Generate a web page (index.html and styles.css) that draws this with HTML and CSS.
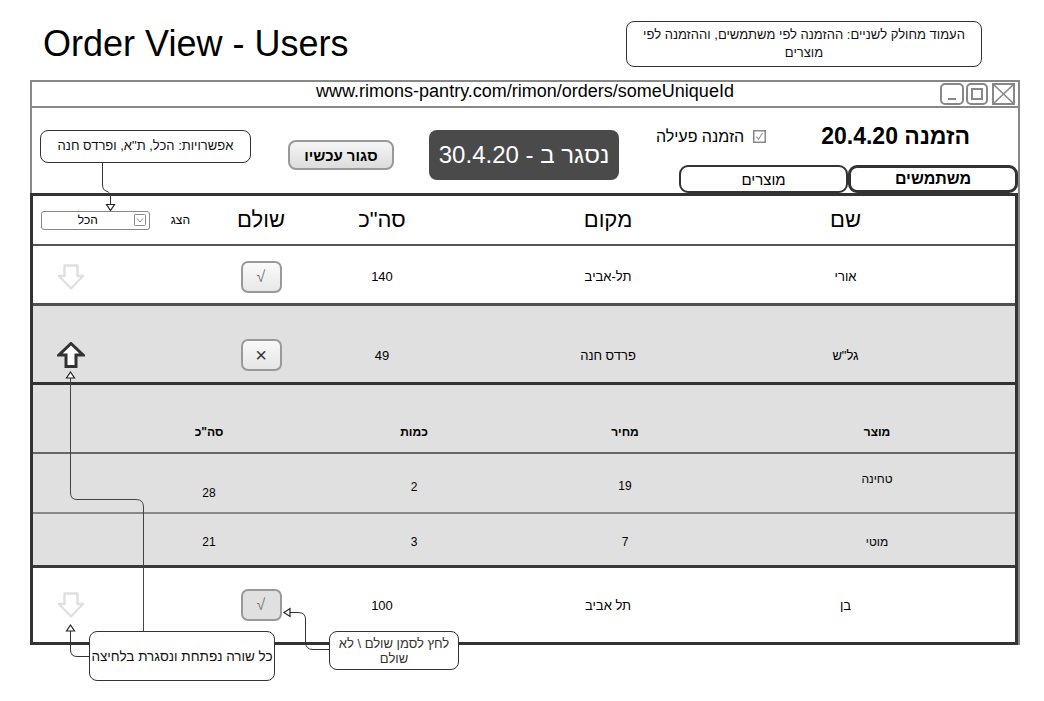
FILE: index.html
```html
<!DOCTYPE html>
<html lang="he">
<head>
<meta charset="utf-8">
<title>Order View - Users</title>
<link rel="stylesheet" href="styles.css">
</head>
<body>
<div class="page">
  <header class="top">
    <h1 class="page-title">Order View - Users</h1>
    <div class="note note-split" dir="rtl">העמוד מחולק לשניים: ההזמנה לפי משתמשים, וההזמנה לפי<br>מוצרים</div>
  </header>

  <div class="window">
    <div class="titlebar">
      <span class="url">www.rimons-pantry.com/rimon/orders/someUniqueId</span>
      <svg class="win-controls" width="76" height="22" viewBox="0 0 76 22">
        <rect x="1" y="1" width="22" height="20" rx="4" fill="none" stroke="#888" stroke-width="2"/>
        <line x1="8" y1="16" x2="16" y2="16" stroke="#888" stroke-width="2"/>
        <rect x="27" y="1" width="20" height="20" rx="4" fill="none" stroke="#888" stroke-width="2"/>
        <rect x="32" y="6" width="10" height="10" fill="none" stroke="#888" stroke-width="2"/>
        <rect x="53" y="1" width="21" height="20" fill="none" stroke="#888" stroke-width="2"/>
        <line x1="53" y1="1" x2="74" y2="21" stroke="#888" stroke-width="1.6"/>
        <line x1="74" y1="1" x2="53" y2="21" stroke="#888" stroke-width="1.6"/>
      </svg>
    </div>

    <div class="toolbar" dir="rtl">
      <div class="order-side">
        <div class="order-head">
          <span class="order-title">הזמנה 20.4.20</span>
          <span class="active-check">
            <svg class="checkbox" width="13" height="13" viewBox="0 0 13 13">
              <rect x="0.75" y="0.75" width="11.5" height="11.5" fill="#fff" stroke="#888" stroke-width="1.5"/>
              <path d="M3.5 6.5 L5.5 9.5 L9.5 3" fill="none" stroke="#999" stroke-width="1.2"/>
            </svg>
            <span>הזמנה פעילה</span>
          </span>
        </div>
        <div class="tabs">
          <div class="tab tab-active">משתמשים</div>
          <div class="tab tab-second">מוצרים</div>
        </div>
      </div>
      <div class="closing-box">נסגר ב - 30.4.20</div>
      <div class="close-btn">סגור עכשיו</div>
      <div class="note note-filter">אפשרויות: הכל, ת"א, ופרדס חנה</div>
    </div>

    <div class="table" dir="rtl">
      <div class="trow thead">
        <div></div>
        <div class="cell">שם</div>
        <div class="cell">מקום</div>
        <div class="cell">סה"כ</div>
        <div class="cell">שולם</div>
        <div class="filter">
          <span class="filter-label">הצג</span>
          <div class="select">
            <svg class="sel-icon" width="12" height="12" viewBox="0 0 12 12">
              <rect x="0.5" y="0.5" width="11" height="11" rx="1" fill="#fff" stroke="#888"/>
              <path d="M3 4.5 L6 8 L9 4.5" fill="none" stroke="#888" stroke-width="1"/>
            </svg>
            <span class="sel-text">הכל</span>
          </div>
        </div>
      </div>

      <div class="trow row row-first">
        <div></div>
        <div class="cell">אורי</div>
        <div class="cell">תל-אביב</div>
        <div class="cell">140</div>
        <div class="cell"><span class="pay-btn">√</span></div>
        <div class="arrow-cell">
          <svg width="28" height="26" viewBox="0 0 28 26"><path d="M7.5 1.5 H20.5 V12 H26 L14 24.5 L2 12 H7.5 Z" fill="#fff" stroke="#e0e0e0" stroke-width="2.5" stroke-linejoin="round"/></svg>
        </div>
      </div>

      <div class="trow row row-open">
        <div></div>
        <div class="cell">גל"ש</div>
        <div class="cell">פרדס חנה</div>
        <div class="cell">49</div>
        <div class="cell"><span class="pay-btn pay-no">×</span></div>
        <div class="arrow-cell">
          <svg width="28" height="26" viewBox="0 0 28 26"><path d="M14 1.5 L26 13 H19 V24.5 H9 V13 H2 Z" fill="#fff" stroke="#333" stroke-width="3" stroke-linejoin="miter"/></svg>
        </div>
      </div>

      <div class="sub">
        <div class="srow shead">
          <div class="scell c-prod">מוצר</div>
          <div class="scell c-price">מחיר</div>
          <div class="scell c-qty">כמות</div>
          <div class="scell c-sum">סה"כ</div>
        </div>
        <div class="srow srow-a">
          <div class="scell c-prod o18">טחינה</div>
          <div class="scell c-price o25">19</div>
          <div class="scell c-qty o26">2</div>
          <div class="scell c-sum o32">28</div>
        </div>
        <div class="srow srow-b">
          <div class="scell c-prod">מוטי</div>
          <div class="scell c-price">7</div>
          <div class="scell c-qty">3</div>
          <div class="scell c-sum">21</div>
        </div>
      </div>

      <div class="trow row row-last">
        <div></div>
        <div class="cell">בן</div>
        <div class="cell">תל אביב</div>
        <div class="cell">100</div>
        <div class="cell"><span class="pay-btn pay-pressed">√</span></div>
        <div class="arrow-cell">
          <svg width="28" height="26" viewBox="0 0 28 26"><path d="M7.5 1.5 H20.5 V12 H26 L14 24.5 L2 12 H7.5 Z" fill="#fff" stroke="#e0e0e0" stroke-width="2.5" stroke-linejoin="round"/></svg>
        </div>
      </div>
    </div>
  </div>

  <svg class="connectors" width="1044" height="701" viewBox="0 0 1044 701">
    <g fill="none" stroke="#333" stroke-width="1">
      <path d="M102.5 163 V184 Q102.5 190 106 191 Q110.5 192 110.5 197 V204"/>
      <path d="M329 649.5 H313 Q305.5 649.5 305.5 642 V619 Q305.5 612.5 298 612.5 H290"/>
      <path d="M89 656.5 H77 Q70.5 656.5 70.5 650 V631"/>
      <path d="M143.5 631 V507 Q143.5 499.5 136 499.5 H77 Q70.5 499.5 70.5 493 V378" stroke="#444"/>
    </g>
    <g fill="#fff" stroke="#222" stroke-width="1.2">
      <polygon points="106.5,204.5 114.5,204.5 110.5,210.5"/>
      <polygon points="290,608.5 290,616.5 284,612.5"/>
      <polygon points="66.5,631 74.5,631 70.5,625"/>
      <polygon points="66.5,378 74.5,378 70.5,372"/>
    </g>
  </svg>

  <div class="note note-rows" dir="rtl">כל שורה נפתחת ונסגרת בלחיצה</div>
  <div class="note note-paid" dir="rtl">לחץ לסמן שולם \ לא<br>שולם</div>
</div>
</body>
</html>
```

FILE: styles.css
```css
* { box-sizing: border-box; }

body {
  margin: 0;
  background: #fff;
  color: #000;
  font-family: "Liberation Sans", Arial, "DejaVu Sans", sans-serif;
}

.page {
  position: relative;
  width: 1044px;
  height: 701px;
  overflow: hidden;
}

/* ---------- top heading ---------- */
.top {
  height: 80px;
  display: flex;
  justify-content: space-between;
  align-items: flex-start;
  padding: 0 62px 0 43px;
}

.page-title {
  margin: 24px 0 0;
  font-size: 36px;
  line-height: 40px;
  font-weight: normal;
}

.note {
  border: 1.5px solid #333;
  border-radius: 8px;
  background: #fff;
  text-align: center;
  color: #111;
  white-space: nowrap;
}

.note-split {
  margin-top: 21px;
  width: 356px;
  height: 46px;
  padding: 4px 6px;
  font-size: 13px;
  line-height: 18px;
}

/* ---------- browser window ---------- */
.window {
  margin-left: 30px;
  width: 990px;
  border: 2px solid #888;
  border-bottom: none;
}

.titlebar {
  display: grid;
  grid-template-columns: 1fr auto 1fr;
  height: 26px;
  border-bottom: 2px solid #888;
}

.url {
  grid-column: 2;
  font-size: 18px;
  line-height: 19px;
}

.win-controls {
  grid-column: 3;
  justify-self: end;
  margin: 1px 2px 0 0;
}

/* ---------- toolbar ---------- */
.toolbar {
  height: 85px;
  display: flex;
  align-items: flex-start;
}

.order-side {
  flex-shrink: 0;
  width: 339px;
  height: 85px;
  display: flex;
  flex-direction: column;
  justify-content: space-between;
}

.order-head {
  display: flex;
  align-items: center;
  padding: 15px 48px 0 0;
  white-space: nowrap;
}

.order-title {
  flex-shrink: 0;
  font-size: 23px;
  font-weight: bold;
  line-height: 26px;
}

.active-check {
  flex-shrink: 0;
  margin-right: 55px;
  margin-top: 1px;
  display: flex;
  align-items: center;
  gap: 9px;
  font-size: 16px;
  line-height: 18px;
}

.tabs {
  display: flex;
}

.tab {
  flex-shrink: 0;
  width: 170px;
  height: 28px;
  border: 2px solid #333;
  border-radius: 9px;
  background: #fff;
  display: flex;
  align-items: center;
  justify-content: center;
  font-size: 15px;
}

.tab-active {
  border-width: 3px;
  font-weight: bold;
  font-size: 16px;
}

.tab-second {
  width: 169px;
}

.closing-box {
  flex-shrink: 0;
  margin: 22px 60px 0 0;
  width: 190px;
  height: 50px;
  border-radius: 8px;
  background: #4a4a4a;
  color: #fff;
  font-size: 24px;
  display: flex;
  align-items: center;
  justify-content: center;
}

.close-btn {
  flex-shrink: 0;
  margin: 32px 35px 0 0;
  width: 106px;
  height: 30px;
  border: 2px solid #999;
  border-radius: 8px;
  background: linear-gradient(#f6f6f6, #dcdcdc);
  font-size: 15px;
  font-weight: bold;
  display: flex;
  align-items: center;
  justify-content: center;
}

.note-filter {
  flex-shrink: 0;
  margin: 22px 37px 0 0;
  width: 211px;
  height: 33px;
  font-size: 13px;
  line-height: 30px;
}

/* ---------- table ---------- */
.table {
  margin-left: -2px;
  width: 988px;
  border: 3px solid #333;
  background: #fff;
}

.trow {
  display: grid;
  grid-template-columns: 97px 145px 330px 122px 120px 168px;
  align-items: center;
}

.cell {
  text-align: center;
}

.thead {
  height: 50px;
  border-bottom: 2px solid #555;
  font-size: 22px;
}

.filter {
  display: flex;
  align-items: center;
}

.filter-label {
  margin-right: 11px;
  font-size: 12px;
}

.select {
  margin-right: 21px;
  width: 109px;
  height: 19px;
  border: 1.5px solid #888;
  border-radius: 3px;
  display: flex;
  align-items: center;
  font-size: 12px;
}

.sel-icon {
  margin-right: 3px;
}

.sel-text {
  flex: 1;
  text-align: center;
}

.row {
  font-size: 13px;
}

.row-first {
  height: 60px;
  padding-top: 4px;
  border-bottom: 3px solid #505050;
}

.row-open {
  height: 79px;
  padding-top: 22px;
  background: #e0e0e0;
  border-bottom: 3px solid #333;
}

.row-last {
  height: 74px;
}

.arrow-cell {
  display: flex;
  justify-content: flex-end;
  padding-left: 24px;
}

.arrow-cell svg {
  display: block;
}

.pay-btn {
  display: inline-flex;
  align-items: center;
  justify-content: center;
  width: 41px;
  height: 32px;
  border: 2px solid #999;
  border-radius: 7px;
  background: linear-gradient(#fafafa, #e8e8e8);
  color: #777;
  font-size: 16px;
  vertical-align: middle;
}

.pay-no {
  color: #333;
  font-size: 20px;
  background: linear-gradient(#f8f8f8, #e6e6e6);
}

.pay-pressed {
  background: #e0e0e0;
  border-color: #999;
}

/* ---------- expanded sub table ---------- */
.sub {
  background: #e0e0e0;
  border-bottom: 3px solid #3a3a3a;
}

.srow {
  display: grid;
  grid-template-columns: 61px 154px 69px 212px 210px 200px 76px;
  align-items: start;
  font-size: 12px;
  line-height: 15px;
}

.scell {
  text-align: center;
}

.c-prod { grid-column: 2; }
.c-price { grid-column: 4; }
.c-qty { grid-column: 5; }
.c-sum { grid-column: 6; }

.shead {
  height: 69px;
  padding-top: 40px;
  border-bottom: 2px solid #666;
  font-weight: bold;
}

.srow-a {
  height: 60px;
  border-bottom: 2px solid #888;
}

.o18 { margin-top: 18px; }
.o25 { margin-top: 25px; }
.o26 { margin-top: 26px; }
.o32 { margin-top: 32px; }

.srow-b {
  height: 51px;
  padding-top: 21px;
}

/* ---------- annotations ---------- */
.connectors {
  position: absolute;
  top: 0;
  left: 0;
  pointer-events: none;
}

.note-rows {
  position: absolute;
  left: 89px;
  top: 631px;
  width: 186px;
  height: 50px;
  font-size: 13.5px;
  display: flex;
  align-items: center;
  justify-content: center;
}

.note-paid {
  position: absolute;
  left: 329px;
  top: 631px;
  width: 130px;
  height: 39px;
  padding-top: 4px;
  font-size: 13px;
  line-height: 15px;
  color: #333;
}
```
